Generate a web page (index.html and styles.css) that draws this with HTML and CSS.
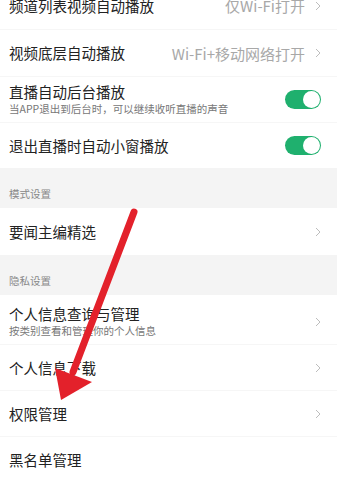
FILE: index.html
```html
<!DOCTYPE html>
<html lang="zh-CN">
  <head>
    <meta charset="UTF-8" />
    <meta name="viewport" content="width=device-width, initial-scale=1.0" />
    <title>设置</title>
    <link rel="stylesheet" href="styles.css">
  </head>
  <body>
    <div class="page">
      <div class="list list-top">
        <div class="item">
          <span class="title">频道列表视频自动播放</span>
          <span class="value">仅Wi-Fi打开</span>
          <svg class="chevron" width="6" height="10" viewBox="0 0 6 10"><polyline points="1,1 5,5 1,9" /></svg>
        </div>
        <div class="item">
          <span class="title">视频底层自动播放</span>
          <span class="value">Wi-Fi+移动网络打开</span>
          <svg class="chevron" width="6" height="10" viewBox="0 0 6 10"><polyline points="1,1 5,5 1,9" /></svg>
        </div>
        <div class="item item-short">
          <div class="text">
            <span class="title">直播自动后台播放</span>
            <span class="desc">当APP退出到后台时，可以继续收听直播的声音</span>
          </div>
          <span class="switch on"></span>
        </div>
        <div class="item item-short">
          <span class="title">退出直播时自动小窗播放</span>
          <span class="switch on"></span>
        </div>
      </div>

      <div class="section">模式设置</div>
      <div class="list">
        <div class="item">
          <span class="title">要闻主编精选</span>
          <svg class="chevron" width="6" height="10" viewBox="0 0 6 10"><polyline points="1,1 5,5 1,9" /></svg>
        </div>
      </div>

      <div class="section">隐私设置</div>
      <div class="list">
        <div class="item item-tall">
          <div class="text">
            <span class="title">个人信息查询与管理</span>
            <span class="desc">按类别查看和管理你的个人信息</span>
          </div>
          <svg class="chevron" width="6" height="10" viewBox="0 0 6 10"><polyline points="1,1 5,5 1,9" /></svg>
        </div>
        <div class="item item-short">
          <span class="title">个人信息下载</span>
          <svg class="chevron" width="6" height="10" viewBox="0 0 6 10"><polyline points="1,1 5,5 1,9" /></svg>
        </div>
        <div class="item item-short">
          <span class="title">权限管理</span>
          <svg class="chevron" width="6" height="10" viewBox="0 0 6 10"><polyline points="1,1 5,5 1,9" /></svg>
        </div>
        <div class="item item-short">
          <span class="title">黑名单管理</span>
        </div>
      </div>

      <!-- 标注箭头 -->
      <svg class="arrow" width="337" height="502" viewBox="0 0 337 502">
        <line x1="134" y1="212" x2="73" y2="372" />
        <polygon points="55,368 92,382 61,400" />
      </svg>
    </div>
  </body>
</html>
```

FILE: styles.css
```css
/* 기본 */
body {
  margin: 0;
  background: #fff;
  font-family: "Noto Sans CJK SC", "Noto Sans", sans-serif;
  color: #222;
}

.page {
  position: relative;
  width: 337px;
  height: 502px;
  overflow: hidden;
}

.list-top {
  margin-top: -18px;
}

/* 설정 항목 */
.item {
  display: flex;
  align-items: center;
  height: 47px;
  padding: 0 16px 0 9px;
  box-sizing: border-box;
}
.item + .item {
  border-top: 1px solid #f6f6f6;
}
.item-short {
  height: 46px;
}
.item-tall {
  height: 49px;
  padding-top: 4px;
}

.text {
  display: flex;
  flex-direction: column;
  flex: 1;
}
.title {
  flex: 1;
  font-size: 14.5px;
  line-height: 18px;
  color: #222;
}
.desc {
  font-size: 10.5px;
  line-height: 15px;
  color: #777;
}
.value {
  font-size: 15px;
  color: #a8a8a8;
  margin-right: 10px;
}
.chevron {
  flex: none;
}
.chevron polyline {
  fill: none;
  stroke: #bdbdbd;
  stroke-width: 1;
}

/* 토글 */
.switch {
  position: relative;
  width: 36px;
  height: 19px;
  border-radius: 10px;
  background: #1fb06e;
  flex: none;
}
.switch::after {
  content: "";
  position: absolute;
  top: 1px;
  right: 1px;
  width: 17px;
  height: 17px;
  border-radius: 50%;
  background: #fff;
}

/* 섹션 제목 */
.section {
  height: 40px;
  box-sizing: border-box;
  padding: 18px 9px 0;
  background: #f4f4f4;
  font-size: 10.5px;
  line-height: 15px;
  color: #888;
}

/* 빨간 화살표 */
.arrow {
  position: absolute;
  top: 0;
  left: 0;
}
.arrow line {
  stroke: #e3212b;
  stroke-width: 7;
  stroke-linecap: round;
}
.arrow polygon {
  fill: #e3212b;
}
```
